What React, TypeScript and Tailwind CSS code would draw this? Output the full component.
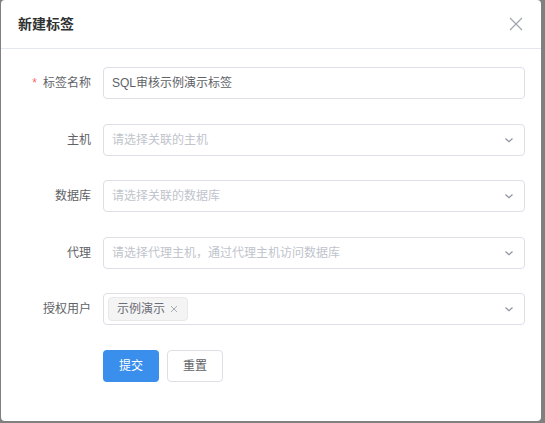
import React from "react";

const font = { fontFamily: '"Liberation Sans", "Noto Sans CJK SC", sans-serif' };

function Chevron() {
  return (
    <svg width="10" height="10" viewBox="0 0 10 10" className="text-[#8d93a0]">
      <path d="M1.5 3.5 L5 6.8 L8.5 3.5" fill="none" stroke="currentColor" strokeWidth="1.2" />
    </svg>
  );
}

function Row({ label, required, children }: { label: string; required?: boolean; children: React.ReactNode }) {
  return (
    <div className="flex items-center">
      <div className="w-[102px] pr-[12px] flex justify-end items-center text-[12px] text-[#606266]">
        {required && <span className="text-[#f56c6c] mr-[6px]">*</span>}
        {label}
      </div>
      {children}
    </div>
  );
}

function Select({ placeholder, children }: { placeholder?: string; children?: React.ReactNode }) {
  return (
    <div className="w-[422px] h-[32px] border border-[#dcdfe6] rounded-[4px] flex items-center pl-[8px] pr-[10px]">
      <div className="flex-1 text-[12px] text-[#c0c4cc]">{children ?? placeholder}</div>
      <Chevron />
    </div>
  );
}

export default function App() {
  return (
    <div className="w-[545px] h-[423px] bg-[#808080] pl-[1px]" style={font}>
      <div className="w-[540px] h-[421px] bg-white rounded-[4px] flex flex-col">
        <div className="h-[49px] flex items-center justify-between pl-[17px] pr-[18px] border-b border-[#e4e7ed]">
          <span className="text-[14px] font-bold text-[#303133]">新建标签</span>
          <svg width="14" height="14" viewBox="0 0 14 14" className="text-[#a0a4ad]">
            <path d="M1 1 L13 13 M13 1 L1 13" stroke="currentColor" strokeWidth="1.2" />
          </svg>
        </div>
        <div className="pt-[18px] flex flex-col gap-[24.6px]">
          <Row label="标签名称" required>
            <div className="w-[422px] h-[32px] border border-[#dcdfe6] rounded-[4px] flex items-center px-[8px] text-[12px] text-[#606266]">
              SQL审核示例演示标签
            </div>
          </Row>
          <Row label="主机">
            <Select placeholder="请选择关联的主机" />
          </Row>
          <Row label="数据库">
            <Select placeholder="请选择关联的数据库" />
          </Row>
          <Row label="代理">
            <Select placeholder="请选择代理主机，通过代理主机访问数据库" />
          </Row>
          <Row label="授权用户">
            <div className="w-[422px] h-[32px] border border-[#dcdfe6] rounded-[4px] flex items-center pl-[4px] pr-[10px]">
              <div className="flex-1 flex">
                <span className="h-[24px] px-[8px] flex items-center gap-[4px] bg-[#f4f4f5] border border-[#e9e9eb] rounded-[4px] text-[12px] text-[#6b6e75]">
                  示例演示
                  <svg width="10" height="10" viewBox="0 0 10 10" className="text-[#a8abb2]">
                    <path d="M2 2 L8 8 M8 2 L2 8" stroke="currentColor" strokeWidth="1" />
                  </svg>
                </span>
              </div>
              <Chevron />
            </div>
          </Row>
          <div className="flex pl-[102px] gap-[8px]">
            <button className="w-[56px] h-[32px] rounded-[4px] bg-[#3a8fed] text-white text-[12px]">提交</button>
            <button className="w-[56px] h-[32px] rounded-[4px] border border-[#dcdfe6] bg-white text-[#606266] text-[12px]">重置</button>
          </div>
        </div>
      </div>
    </div>
  );
}
